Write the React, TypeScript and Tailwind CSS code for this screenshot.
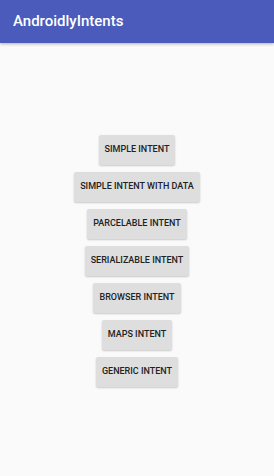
const buttons = [
  "Simple Intent",
  "Simple Intent With Data",
  "Parcelable Intent",
  "Serializable Intent",
  "Browser Intent",
  "Maps Intent",
  "Generic Intent",
]

export default function App() {
  return (
    <div className="flex h-[476px] w-[274px] flex-col bg-[#fafafa] font-['Roboto',sans-serif]">
      <div className="flex h-[43px] items-center bg-[#4a5bbb] px-[13px] shadow-[0_1px_3px_rgba(0,0,0,0.3)]">
        <span className="text-[15px] font-medium text-white">AndroidlyIntents</span>
      </div>
      <div className="flex flex-col items-center gap-[7px] pt-[92px]">
        {buttons.map((b) => (
          <button
            key={b}
            className="h-[30px] rounded-[2px] bg-[#dedede] px-[6px] text-[9px] font-medium uppercase text-[#222] shadow-[0_1px_2px_rgba(0,0,0,0.2)]"
          >
            {b}
          </button>
        ))}
      </div>
    </div>
  )
}
